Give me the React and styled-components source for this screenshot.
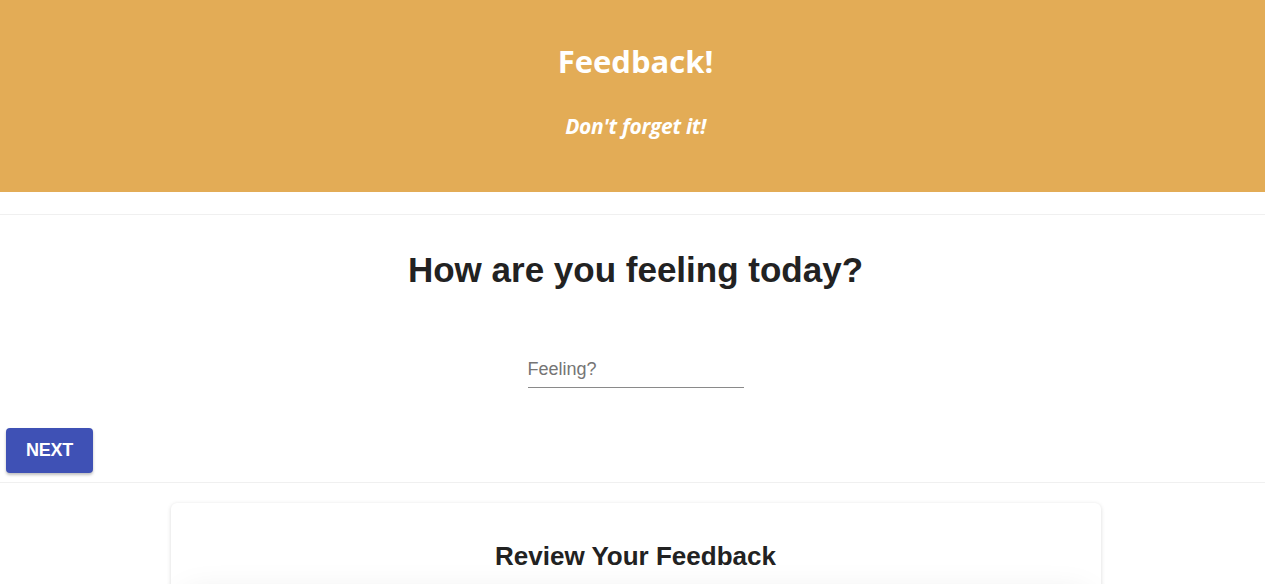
import React from "react";
import styled, { createGlobalStyle } from "styled-components";

export default function App() {
  return (
    <>
      <GlobalStyle />
      <Header>
        <Title>Feedback!</Title>
        <Tagline>Don't forget it!</Tagline>
      </Header>
      <Rule top={22} />
      <Content>
        <Question>How are you feeling today?</Question>
        <FieldRow>
          <Field placeholder="Feeling?" />
        </FieldRow>
        <NextButton>NEXT</NextButton>
      </Content>
      <Rule top={9} />
      <Content>
        <ReviewCard>
          <ReviewTitle>Review Your Feedback</ReviewTitle>
          <InnerCard />
        </ReviewCard>
      </Content>
    </>
  );
}

const GlobalStyle = createGlobalStyle`
  body {
    margin: 0;
    background: #fff;
    font-family: "Liberation Sans", Arial, sans-serif;
    overflow: hidden;
  }
`;

const Header = styled.header`
  height: 192px;
  background-color: #e3ac56;
  color: #fff;
  text-align: center;
  padding: 41px 0 0 6px;
  box-sizing: border-box;
  font-family: "Open Sans", sans-serif;
`;

const Title = styled.h1`
  margin: 0;
  font-size: 31px;
  font-weight: 700;
  line-height: 40px;
`;

const Tagline = styled.h3`
  margin: 32px 0 0;
  font-size: 21px;
  font-style: italic;
  font-weight: 700;
  letter-spacing: -0.3px;
  line-height: 26px;
`;

const Rule = styled.hr`
  margin: ${(p) => p.top}px 0 0;
  border: 0;
  border-top: 1px solid #f0f0f0;
`;

const Content = styled.div`
  padding-left: 6px;
`;

const Question = styled.h2`
  margin: 35px 0 0;
  text-align: center;
  font-size: 35px;
  font-weight: 700;
  color: #222;
  line-height: 40px;
`;

const FieldRow = styled.div`
  display: flex;
  justify-content: center;
  margin-top: 63px;
`;

const Field = styled.input`
  width: 216px;
  border: 0;
  border-bottom: 1px solid #8a8a8a;
  padding: 6px 0 7px;
  font-family: "Liberation Sans", Arial, sans-serif;
  font-size: 18px;
  color: #333;
  outline: none;
  background: transparent;
  &::placeholder {
    color: #757575;
  }
`;

const NextButton = styled.button`
  display: block;
  margin: 40px 0 0;
  width: 87px;
  height: 45px;
  border: 0;
  border-radius: 4px;
  background: #3f51b5;
  color: #fff;
  font-family: "Liberation Sans", Arial, sans-serif;
  font-size: 18px;
  font-weight: 700;
  letter-spacing: -0.3px;
  box-shadow: 0 2px 3px rgba(0, 0, 0, 0.25);
  cursor: pointer;
`;

const ReviewCard = styled.section`
  width: 930px;
  margin: 20px auto 0;
  padding: 36px 14px 0;
  box-sizing: border-box;
  border-radius: 6px;
  background: #fff;
  box-shadow: 0 1px 4px rgba(0, 0, 0, 0.15);
  height: 120px;
`;

const ReviewTitle = styled.h2`
  margin: 0;
  text-align: center;
  font-size: 26px;
  font-weight: 700;
  color: #222;
  line-height: 34px;
`;

const InnerCard = styled.div`
  margin-top: 30px;
  height: 80px;
  border-radius: 6px;
  box-shadow: 0 -8px 34px rgba(0, 0, 0, 0.1);
`;
